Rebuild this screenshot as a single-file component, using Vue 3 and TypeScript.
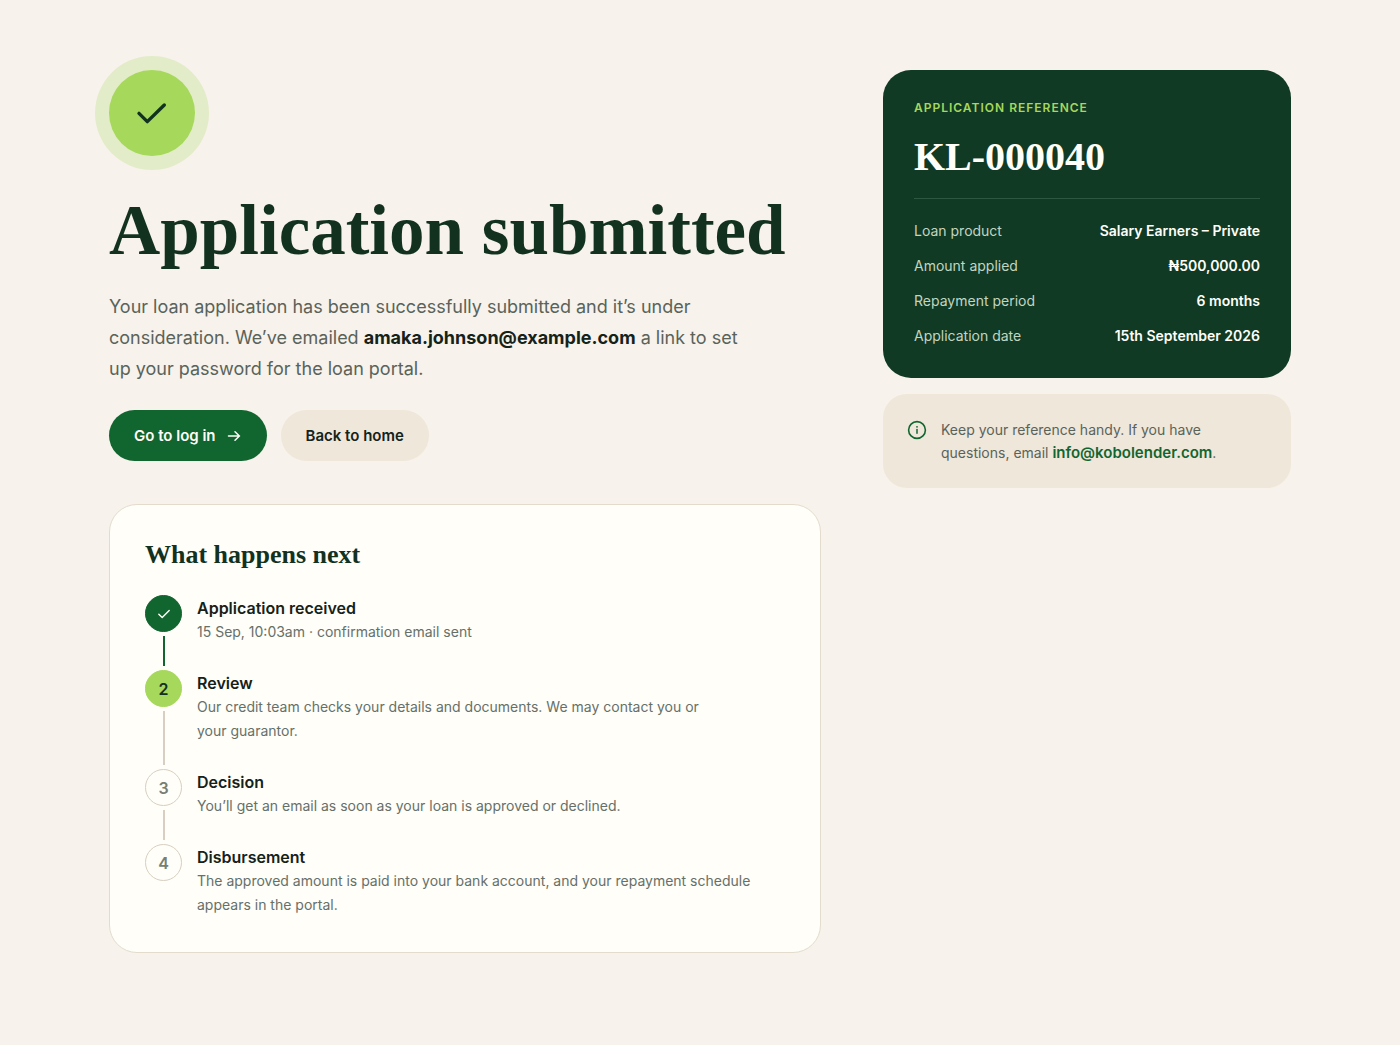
<script setup lang="ts">
interface Detail {
  label: string
  value: string
}

interface Step {
  title: string
  text: string
  state: 'done' | 'current' | 'upcoming'
}

const email = 'amaka.johnson@example.com'
const supportEmail = 'info@kobolender.com'

const details: Detail[] = [
  { label: 'Loan product', value: 'Salary Earners – Private' },
  { label: 'Amount applied', value: '₦500,000.00' },
  { label: 'Repayment period', value: '6 months' },
  { label: 'Application date', value: '15th September 2026' },
]

const steps: Step[] = [
  { title: 'Application received', text: '15 Sep, 10:03am · confirmation email sent', state: 'done' },
  {
    title: 'Review',
    text: 'Our credit team checks your details and documents. We may contact you or your\u00a0guarantor.',
    state: 'current',
  },
  { title: 'Decision', text: 'You’ll get an email as soon as your loan is approved or declined.', state: 'upcoming' },
  {
    title: 'Disbursement',
    text: 'The approved amount is paid into your bank account, and your repayment schedule appears in the portal.',
    state: 'upcoming',
  },
]
</script>

<template>
  <main class="page">
    <div class="layout">
      <section class="main">
        <div class="badge">
          <svg width="40" height="40" viewBox="0 0 40 40" fill="none" aria-hidden="true">
            <path d="M7 20.4l8.3 8.2L32.3 12" stroke="currentColor" stroke-width="3.4" stroke-linecap="round" stroke-linejoin="round" />
          </svg>
        </div>
        <h1>Application submitted</h1>
        <p class="lead">
          Your loan application has been successfully submitted and it’s under consideration. We’ve emailed
          <strong>{{ email }}</strong> a link to set up your password for the loan portal.
        </p>
        <div class="actions">
          <button type="button" class="btn primary">
            Go to log in
            <svg width="16" height="16" viewBox="0 0 16 16" fill="none" aria-hidden="true">
              <path d="M2.5 8h11M9 3.7L13.4 8 9 12.3" stroke="currentColor" stroke-width="1.5" stroke-linecap="round" stroke-linejoin="round" />
            </svg>
          </button>
          <button type="button" class="btn secondary">Back to home</button>
        </div>

        <section class="next">
          <h2>What happens next</h2>
          <ol class="steps">
            <li v-for="(step, i) in steps" :key="step.title" class="step" :class="step.state">
              <div class="rail">
                <span class="dot">
                  <svg v-if="step.state === 'done'" width="16" height="16" viewBox="0 0 16 16" fill="none" aria-hidden="true">
                    <path d="M2.8 8.2l3.4 3.4 7-7" stroke="currentColor" stroke-width="1.4" stroke-linecap="round" stroke-linejoin="round" />
                  </svg>
                  <template v-else>{{ i + 1 }}</template>
                </span>
                <span v-if="i < steps.length - 1" class="line"></span>
              </div>
              <div class="body">
                <h3>{{ step.title }}</h3>
                <p>{{ step.text }}</p>
              </div>
            </li>
          </ol>
        </section>
      </section>

      <aside class="side">
        <section class="summary">
          <p class="eyebrow">APPLICATION REFERENCE</p>
          <p class="reference">KL-000040</p>
          <dl class="details">
            <div v-for="d in details" :key="d.label" class="row">
              <dt>{{ d.label }}</dt>
              <dd>{{ d.value }}</dd>
            </div>
          </dl>
        </section>
        <section class="note">
          <svg width="20" height="20" viewBox="0 0 20 20" fill="none" aria-hidden="true">
            <circle cx="10" cy="10" r="8.4" stroke="currentColor" stroke-width="1.6" />
            <path d="M10 9.4v3.8" stroke="currentColor" stroke-width="1.5" stroke-linecap="round" />
            <circle cx="10" cy="6.8" r="0.9" fill="currentColor" />
          </svg>
          <p>
            Keep your reference handy. If you have questions, email
            <a :href="`mailto:${supportEmail}`">{{ supportEmail }}</a>.
          </p>
        </section>
      </aside>
    </div>
  </main>
</template>

<style>
body {
  margin: 0;
  background: #f7f2eb;
}
</style>

<style scoped>
.page {
  box-sizing: border-box;
  min-height: 100vh;
  padding: 70px 24px;
  background: #f7f2eb;
  color: #15221a;
  font-family: Inter, "Noto Sans", sans-serif;
}

h1,
h2,
h3,
p,
ol,
dl,
dd {
  margin: 0;
  padding: 0;
}

.layout {
  display: grid;
  grid-template-columns: minmax(0, 1fr) 408px;
  gap: 62px;
  align-items: start;
  max-width: 1182px;
  margin: 0 auto;
}

.badge {
  display: flex;
  align-items: center;
  justify-content: center;
  width: 86px;
  height: 86px;
  border-radius: 50%;
  background: #a6d85c;
  box-shadow: 0 0 0 14px #e3ecc8;
  color: #12321f;
}

h1 {
  margin-top: 36px;
  color: #12321f;
  font: 700 71px/76px "Liberation Serif", serif;
}

.lead {
  max-width: 644px;
  margin-top: 23px;
  color: #5a635a;
  font-size: 18px;
  line-height: 31px;
}

.lead strong {
  color: #15221a;
  font-weight: 700;
}

.actions {
  display: flex;
  flex-wrap: wrap;
  gap: 14px;
  margin-top: 26px;
}

.btn {
  display: inline-flex;
  align-items: center;
  gap: 10px;
  height: 51px;
  padding: 0 25px;
  border: 0;
  border-radius: 26px;
  font: 600 15px/24px Inter, "Noto Sans", sans-serif;
  cursor: pointer;
}

.primary {
  background: #116630;
  color: #fffef8;
}

.secondary {
  background: #efe7da;
  color: #15221a;
}

.next {
  margin-top: 43px;
  padding: 35px;
  border: 1px solid #e3dccd;
  border-radius: 28px;
  background: #fffef8;
}

h2 {
  color: #12321f;
  font: 700 26px/30px "Liberation Serif", serif;
}

.steps {
  margin-top: 25px;
  list-style: none;
}

.step {
  display: flex;
  gap: 15px;
}

.rail {
  display: flex;
  flex: none;
  flex-direction: column;
  align-items: center;
}

.dot {
  box-sizing: border-box;
  display: flex;
  align-items: center;
  justify-content: center;
  width: 37px;
  height: 37px;
  border: 1px solid #d8cfc0;
  border-radius: 50%;
  color: #758075;
  font-size: 16px;
  font-weight: 600;
}

.done .dot {
  border-color: #116630;
  background: #116630;
  color: #fffef8;
}

.current .dot {
  border-color: #a6d85c;
  background: #a6d85c;
  color: #12321f;
}

.line {
  flex: 1;
  width: 2px;
  margin: 4px 0;
  background: #d8cfc0;
}

.done .line {
  background: #116630;
}

.body {
  padding: 1px 0 26px;
}

.step:last-child .body {
  padding-bottom: 0;
}

h3 {
  font-size: 16px;
  font-weight: 600;
  line-height: 24px;
}

.body p {
  max-width: 572px;
  color: #66706a;
  font-size: 14px;
  line-height: 24px;
}

.side {
  display: grid;
  gap: 16px;
}

.summary {
  padding: 31px;
  border-radius: 28px;
  background: #103a24;
  color: #fffef8;
}

.eyebrow {
  color: #a6d85c;
  font-size: 12px;
  font-weight: 600;
  line-height: 14px;
  letter-spacing: 1px;
}

.reference {
  margin-top: 20px;
  font: 700 40px/44px "Liberation Serif", serif;
}

.details {
  display: grid;
  gap: 12px;
  margin-top: 19px;
  padding-top: 20px;
  border-top: 1px solid #2f5640;
}

.row {
  display: flex;
  justify-content: space-between;
  gap: 16px;
  font-size: 14px;
  line-height: 23px;
}

dt {
  color: #c2d5c0;
}

dd {
  font-weight: 600;
  text-align: right;
}

.note {
  display: flex;
  gap: 14px;
  padding: 24px;
  border-radius: 24px;
  background: #efe7da;
  color: #5a635a;
  font-size: 14px;
  line-height: 23px;
}

.note svg {
  flex: none;
  margin-top: 2px;
  color: #116630;
}

.note p {
  max-width: 292px;
}

.note a {
  color: #116630;
  font-size: 15px;
  font-weight: 600;
  text-decoration: none;
}
</style>
